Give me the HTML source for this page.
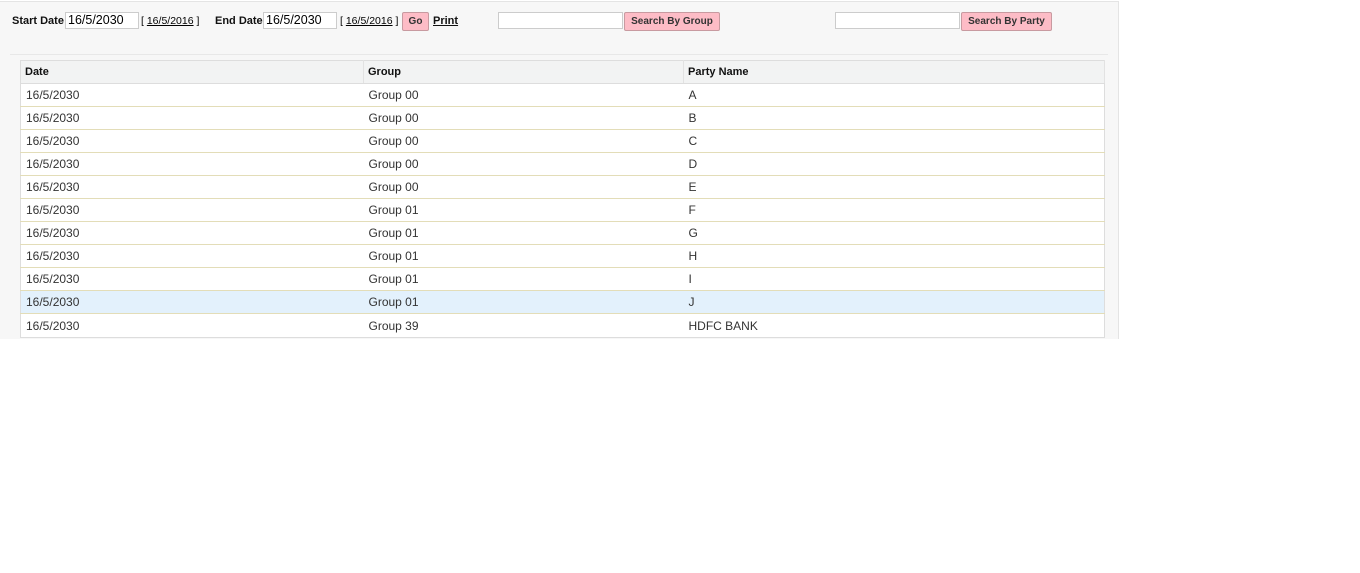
<!DOCTYPE html>
<html><head><style>
*{margin:0;padding:0;box-sizing:border-box}
body{width:1360px;height:573px;background:#fff;font-family:"Liberation Sans",Arial,sans-serif;position:relative;overflow:hidden}
#panel{position:absolute;left:0;top:1px;width:1119px;height:338px;background:#f7f7f7;border-top:1px solid #e4e4e4;border-right:1px solid #e4e4e4}
.a{position:absolute;white-space:nowrap}
.lbl{font-size:11px;font-weight:bold;color:#111}
.inp{position:absolute;height:17px;background:#fff;border:1px solid #ccc;font-size:12.5px;padding-left:2px;line-height:15px;color:#000}
.lnk{font-size:10.5px;color:#000}
.lnk u{color:#000}
.btn{position:absolute;height:19px;background:#fdbcc6;border:1px solid #c89aa0;border-radius:2px;font-size:10px;font-weight:bold;color:#333;text-align:center;line-height:17px}
#sep{position:absolute;left:10px;top:54px;width:1098px;height:1px;background:#e8e8e8}
table{position:absolute;left:20px;top:60px;width:1085px;border-collapse:collapse;background:#fff;border:1px solid #ddd;font-size:12px;color:#333}
th{height:23px;background:#f2f3f3;text-align:left;font-size:11px;font-weight:bold;color:#111;padding-left:4px;border-bottom:1px solid #ddd;border-right:1px solid #e2e2e2}
td{height:23px;padding-left:5px;border-top:1px solid #e3ddb8}
tr.l td{height:24px}
tr.h td{background:#e3f1fc}
</style></head><body>
<div id="panel">
<div class="a lbl" style="left:12px;top:13px">Start Date</div>
<div class="inp" style="left:65px;top:10px;width:74px">16/5/2030</div>
<div class="a lnk" style="left:141px;top:13px">[ <u>16/5/2016</u> ]</div>
<div class="a lbl" style="left:215px;top:13px">End Date</div>
<div class="inp" style="left:263px;top:10px;width:74px">16/5/2030</div>
<div class="a lnk" style="left:340px;top:13px">[ <u>16/5/2016</u> ]</div>
<div class="btn" style="left:402px;top:10px;width:27px">Go</div>
<div class="a lbl" style="left:433px;top:13px"><u>Print</u></div>
<div class="inp" style="left:498px;top:10px;width:125px"></div>
<div class="btn" style="left:624px;top:10px;width:96px">Search By Group</div>
<div class="inp" style="left:835px;top:10px;width:125px"></div>
<div class="btn" style="left:961px;top:10px;width:91px">Search By Party</div>
</div>
<div id="sep"></div>
<table>
<tr><th style="width:343px">Date</th><th style="width:320px">Group</th><th>Party Name</th></tr>
<tr><td>16/5/2030</td><td>Group 00</td><td>A</td></tr>
<tr><td>16/5/2030</td><td>Group 00</td><td>B</td></tr>
<tr><td>16/5/2030</td><td>Group 00</td><td>C</td></tr>
<tr><td>16/5/2030</td><td>Group 00</td><td>D</td></tr>
<tr><td>16/5/2030</td><td>Group 00</td><td>E</td></tr>
<tr><td>16/5/2030</td><td>Group 01</td><td>F</td></tr>
<tr><td>16/5/2030</td><td>Group 01</td><td>G</td></tr>
<tr><td>16/5/2030</td><td>Group 01</td><td>H</td></tr>
<tr><td>16/5/2030</td><td>Group 01</td><td>I</td></tr>
<tr class="h"><td>16/5/2030</td><td>Group 01</td><td>J</td></tr>
<tr class="l"><td>16/5/2030</td><td>Group 39</td><td>HDFC BANK</td></tr>
</table>
</body></html>
